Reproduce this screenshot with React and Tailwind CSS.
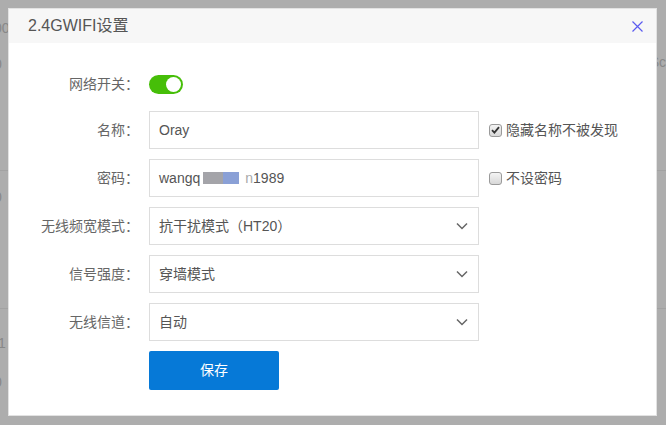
import React, { useState } from 'react'

const font = { fontFamily: '"Liberation Sans", "Noto Sans CJK SC", sans-serif' }

function Chevron() {
  return (
    <svg width="12" height="8" viewBox="0 0 12 8" className="shrink-0">
      <path d="M1 1.5 L6 6.5 L11 1.5" fill="none" stroke="#666" strokeWidth="1.5" />
    </svg>
  )
}

function Check({ checked, label }) {
  return (
    <label className="flex items-center gap-[4px] text-[14px] text-[#555]">
      <span className="w-[13px] h-[13px] rounded-[3px] border border-[#9a9a9a] bg-gradient-to-b from-[#f4f4f4] to-[#d8d8d8] flex items-center justify-center">
        {checked && (
          <svg width="9" height="8" viewBox="0 0 9 8">
            <path d="M1 4.2 L3.4 6.6 L8 1.2" fill="none" stroke="#333" strokeWidth="1.8" />
          </svg>
        )}
      </span>
      {label}
    </label>
  )
}

function Row({ label, children, extra }) {
  return (
    <div className="flex items-center">
      <div className="w-[130px] text-right text-[14px] text-[#666]">{label}</div>
      <div className="ml-[10px] w-[330px] h-[38px] border border-[#ddd] flex items-center justify-between pl-[9px] pr-[10px] text-[14px] text-[#555]">
        {children}
      </div>
      {extra && <div className="ml-[10px]">{extra}</div>}
    </div>
  )
}

export default function App() {
  const [on, setOn] = useState(true)

  return (
    <div className="relative w-[666px] h-[425px] overflow-hidden bg-[#adadad] text-[#888]" style={font}>
      {/* dimmed page behind the dialog */}
      <div className="flex flex-col text-[14px]">
        <div className="h-[171px] border-b border-[#a2a2a2] pt-[18px] flex justify-between">
          <div className="flex flex-col gap-[15px] -ml-[6px]"><span>00</span><span>0</span></div>
          <div className="pt-[34px]">Sc</div>
        </div>
        <div className="h-[138px] border-b border-[#a2a2a2] pt-[16px] -ml-[6px]">0</div>
        <div className="pt-[24px] flex flex-col gap-[18px] -ml-[6px]"><span>.1</span><span>0</span></div>
      </div>

      {/* dialog */}
      <div className="absolute left-[8px] top-[8px] w-[649px] h-[408px] bg-white border border-[#e2e2e2]">
        <div className="h-[34px] bg-[#f7f7f7] flex items-center justify-between pl-[19px] pr-[13px]">
          <span className="text-[16px] text-[#555]">2.4GWIFI设置</span>
          <svg width="11" height="11" viewBox="0 0 11 11">
            <path d="M0.5 0.5 L10.5 10.5 M10.5 0.5 L0.5 10.5" stroke="#5b5bf0" strokeWidth="1.2" />
          </svg>
        </div>

        <div className="flex flex-col">
          <div className="flex items-center mt-[32px] h-[19px]">
            <div className="w-[130px] text-right text-[14px] text-[#666]">网络开关：</div>
            <button
              onClick={() => setOn(!on)}
              className={`ml-[10px] w-[34px] h-[19px] rounded-full flex items-center px-[2px] ${on ? 'bg-[#46be08] justify-end' : 'bg-[#ccc] justify-start'}`}
            >
              <span className="w-[15px] h-[15px] rounded-full bg-white" />
            </button>
          </div>

          <div className="flex flex-col gap-[10px] mt-[17px]">
            <Row label="名称：" extra={<Check checked label="隐藏名称不被发现" />}>
              <span>Oray</span>
            </Row>
            <Row label="密码：" extra={<Check label="不设密码" />}>
              <span className="flex items-center">
                wangq
                <span className="w-[3px]" />
                <span className="w-[20px] h-[12px] bg-[#8d8d93] opacity-80" />
                <span className="w-[16px] h-[12px] bg-[#6d88cc] opacity-80" />
                <span className="w-[6px]" />
                <span className="text-[#aaa]">n</span>1989
              </span>
            </Row>
            <Row label="无线频宽模式：">
              <span>抗干扰模式（HT20）</span>
              <Chevron />
            </Row>
            <Row label="信号强度：">
              <span>穿墙模式</span>
              <Chevron />
            </Row>
            <Row label="无线信道：">
              <span>自动</span>
              <Chevron />
            </Row>
            <div className="ml-[140px]">
              <button className="w-[130px] h-[39px] rounded-[2px] bg-[#0679d7] text-white text-[14px]">保存</button>
            </div>
          </div>
        </div>
      </div>
    </div>
  )
}
